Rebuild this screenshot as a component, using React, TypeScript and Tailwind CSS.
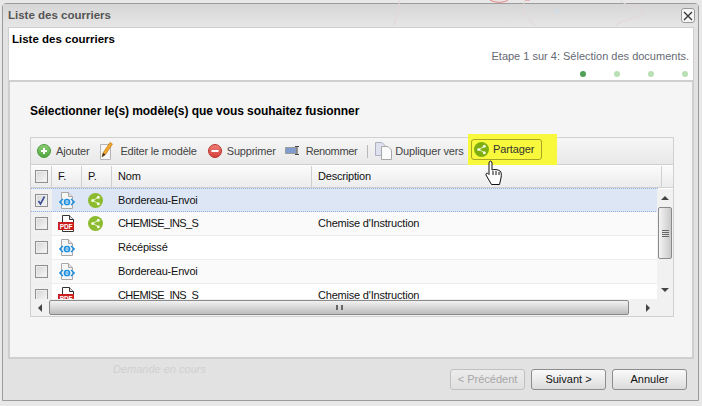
import React from "react";

const font = { fontFamily: '"Liberation Sans", Arial, sans-serif' };

const Check = ({ on }: { on?: boolean }) => (
  <span className="flex h-[13px] w-[13px] items-center justify-center border border-[#8e8f8f] bg-gradient-to-br from-[#d4d4d4] to-[#f8f8f8] shadow-[inset_0_0_0_1px_#eeeeee]">
    {on && (
      <svg width="11" height="11" viewBox="0 0 11 11">
        <path d="M2.5 6 L4.5 9 L8.5 1.5" fill="none" stroke="#3a4f96" strokeWidth="1.6" />
      </svg>
    )}
  </span>
);

const IeIcon = () => (
  <svg width="16" height="17" viewBox="0 0 16 17">
    <path d="M2.5 .5 H9.5 L13.5 4.5 V16.5 H2.5 Z" fill="#f6f6f6" stroke="#a8a8a8" />
    <path d="M9.5 .5 V4.5 H13.5" fill="#e2e2e2" stroke="#a8a8a8" />
    <path d="M4 7 L.8 10 L4 13 M12 7 L15.2 10 L12 13" fill="none" stroke="#1a8fe0" strokeWidth="1.4" />
    <circle cx="8" cy="10" r="2.6" fill="none" stroke="#1a8fe0" strokeWidth="1.5" />
    <path d="M6 10 H10" stroke="#1a8fe0" />
  </svg>
);

const PdfIcon = () => (
  <svg width="17" height="17" viewBox="0 0 17 17">
    <path d="M4.5 .5 H11.5 L15.5 4.5 V16.5 H4.5 Z" fill="#fff" stroke="#333" />
    <path d="M11.5 .5 V4.5 H15.5" fill="#ddd" stroke="#333" />
    <rect x="0" y="7" width="16" height="8" fill="#c9201f" />
    <text x="8" y="13.6" textAnchor="middle" fontSize="6.5" fontWeight="700" fill="#fff" fontFamily="Liberation Sans">PDF</text>
  </svg>
);

const ShareIcon = ({ size = 15, bg = "#8dbb2f" }: { size?: number; bg?: string }) => (
  <svg width={size} height={size} viewBox="0 0 15 15">
    <circle cx="7.5" cy="7.5" r="7.5" fill={bg} />
    <path d="M10.3 4.3 L5 7.5 L10.3 10.7" fill="none" stroke="#e6f2c8" />
    <circle cx="10.3" cy="4.3" r="1.5" fill="#f3f9e2" />
    <circle cx="4.7" cy="7.5" r="1.5" fill="#f3f9e2" />
    <circle cx="10.3" cy="10.7" r="1.5" fill="#f3f9e2" />
  </svg>
);

const RoundIcon = ({ id, top, bottom, dark, plus }: { id: string; top: string; bottom: string; dark: string; plus?: boolean }) => (
  <svg width="14" height="14" viewBox="0 0 14 14">
    <defs>
      <linearGradient id={id} x1="0" y1="0" x2="0" y2="1">
        <stop offset="0" stopColor={top} />
        <stop offset="1" stopColor={bottom} />
      </linearGradient>
    </defs>
    <circle cx="7" cy="7" r="6.5" fill={`url(#${id})`} stroke={dark} />
    <path d={plus ? "M4 7 H10 M7 4 V10" : "M3.5 7 H10.5"} stroke="#fff" strokeWidth="2" />
  </svg>
);

const EditIcon = () => (
  <svg width="16" height="20" viewBox="0 0 16 20">
    <path d="M1.5 3.5 H11.5 V18.5 H1.5 Z" fill="#f7f7f7" stroke="#b5b5b5" />
    <path d="M3 16 L4 12 L11 1.5 L13.5 3 L6.5 13.5 Z" fill="#f0a92c" stroke="#c47a16" strokeWidth=".7" />
    <path d="M3 16 L4 12 L6.5 13.5 Z" fill="#333" />
  </svg>
);

const RenameIcon = () => (
  <svg width="16" height="10" viewBox="0 0 16 10">
    <path d="M.5 1.5 H11 V7.5 H.5 Z" fill="#7f9bd0" stroke="#9a9a9a" />
    <path d="M10 .5 H14 M12 .5 V8.5 M10 8.5 H14" stroke="#444" fill="none" />
  </svg>
);

const DuplicateIcon = () => (
  <svg width="17" height="18" viewBox="0 0 17 18">
    <path d="M.5 .5 H7 L10 3.5 V13.5 H.5 Z" fill="#dfe1ef" stroke="#aeb0c4" />
    <path d="M6.5 4.5 H13 L16.5 8 V17.5 H6.5 Z" fill="#fbfbfb" stroke="#a8a8a8" />
  </svg>
);

const Tool = ({ icon, label, gap = "gap-[5px]" }: { icon: React.ReactNode; label: string; gap?: string }) => (
  <span className={`flex items-center whitespace-nowrap ${gap}`}>
    {icon}
    <span>{label}</span>
  </span>
);

const rows = [
  { icon: "ie", shared: true, nom: "Bordereau-Envoi", desc: "", selected: true },
  { icon: "pdf", shared: true, nom: "CHEMISE_INS_S", desc: "Chemise d'Instruction" },
  { icon: "ie", nom: "Récépissé", desc: "" },
  { icon: "ie", nom: "Bordereau-Envoi", desc: "" },
  { icon: "pdf", nom: "CHEMISE_INS_S", desc: "Chemise d'Instruction" },
];

const Arrow = ({ d }: { d: "up" | "down" | "left" | "right" }) => {
  const p = { up: "M0 5 L4 1 L8 5 Z", down: "M0 1 L8 1 L4 5 Z", left: "M5 0 V8 L1 4 Z", right: "M1 0 V8 L5 4 Z" }[d];
  const vertical = d === "up" || d === "down";
  return (
    <svg width={vertical ? 8 : 6} height={vertical ? 6 : 8} viewBox={vertical ? "0 0 8 6" : "0 0 6 8"}>
      <path d={p} fill="#444" />
    </svg>
  );
};

const Grid = () => (
  <div className="relative h-[180px] w-[644px] overflow-hidden border border-[#d0d0d0] bg-white text-[11px] tracking-[-0.2px] text-[#111]">
    <div className="flex h-[27px] items-center border-b border-[#d0d0d0] bg-gradient-to-b from-[#f6f6f6] to-[#e9e9e9] pl-[6px] text-[#444]">
      <Tool icon={<RoundIcon id="add" top="#8fd07a" bottom="#4fa53c" dark="#4d9a3c" plus />} label="Ajouter" />
      <span className="ml-[10px]"><Tool icon={<EditIcon />} label="Editer le modèle" /></span>
      <span className="ml-[11px]"><Tool icon={<RoundIcon id="del" top="#f0807a" bottom="#d43f38" dark="#b9352f" />} label="Supprimer" /></span>
      <span className="ml-[9px] tracking-[-0.35px]"><Tool icon={<RenameIcon />} label="Renommer" /></span>
      <span className="ml-[10px] h-[13px] w-px bg-[#b8b8b8]" />
      <span className="ml-[7px]"><Tool icon={<DuplicateIcon />} label="Dupliquer vers" gap="gap-[3px]" /></span>
    </div>
    <div className="flex h-[23px] border-b border-[#d0d0d0] bg-gradient-to-b from-[#fcfcfc] to-[#ececec] pt-px">
      <div className="flex w-[21px] items-center justify-center border-r border-[#d0d0d0]"><Check /></div>
      <div className="flex w-[30px] items-center border-r border-[#d0d0d0] pl-[6px]">F.</div>
      <div className="flex w-[30px] items-center border-r border-[#d0d0d0] pl-[6px]">P.</div>
      <div className="flex w-[200px] items-center border-r border-[#d0d0d0] pl-[6px]">Nom</div>
      <div className="flex w-[350px] items-center border-r border-[#d0d0d0] pl-[6px]">Description</div>
    </div>
    <div className="h-[112px] w-[627px] overflow-hidden">
      {rows.map((r, i) => (
        <div
          key={i}
          className={`flex h-[24px] shrink-0 border-b ${
            r.selected
              ? "border-dotted border-b-[#8fb0e0] border-t border-t-[#8fb0e0] bg-[#dde6f5]"
              : i % 2 === 1
              ? "border-[#ededed] bg-[#fafafa]"
              : "border-[#ededed] bg-white"
          }`}
        >
          <div className="flex w-[21px] items-center justify-center bg-[#f0f0f0]"><Check on={r.selected} /></div>
          <div className={`flex w-[30px] items-center ${r.icon === "ie" ? "pl-[7px]" : "pl-[6px]"}`}>{r.icon === "ie" ? <IeIcon /> : <PdfIcon />}</div>
          <div className="flex w-[30px] items-center pl-[6px]">{r.shared && <ShareIcon />}</div>
          <div className={`flex w-[200px] items-center pl-[6px] ${r.nom.startsWith("CHEMISE") ? "tracking-[-0.6px]" : ""}`}>{r.nom}</div>
          <div className="flex items-center pl-[6px]">{r.desc}</div>
        </div>
      ))}
    </div>
    {/* vertical scrollbar */}
    <div className="absolute right-0 top-[51px] flex h-[110px] w-[16px] flex-col items-center bg-[#f1f1f1]">
      <div className="flex h-[18px] items-center"><Arrow d="up" /></div>
      <div className="flex h-[52px] w-[14px] flex-col items-center justify-center gap-px rounded-[2px] border border-[#8a8a8a] bg-gradient-to-r from-[#f4f4f4] to-[#c9c9c9]">
        <span className="h-px w-[7px] bg-[#666]" />
        <span className="h-px w-[7px] bg-[#666]" />
        <span className="h-px w-[7px] bg-[#666]" />
        <span className="h-px w-[7px] bg-[#666]" />
      </div>
      <div className="mt-auto flex h-[18px] items-center"><Arrow d="down" /></div>
    </div>
    {/* horizontal scrollbar */}
    <div className="absolute bottom-0 left-0 flex h-[17px] w-[642px] items-center bg-[#f1f1f1]">
      <div className="flex h-full w-[18px] items-center justify-center"><Arrow d="left" /></div>
      <div className="flex h-[15px] w-[580px] items-center justify-center rounded-[2px] border border-[#8a8a8a] bg-gradient-to-b from-[#f2f2f2] to-[#bdbdbd]">
        <span className="h-[5px] w-[7px] border-x-2 border-[#666]" />
      </div>
      <div className="flex h-full w-[37px] items-center justify-center"><Arrow d="right" /></div>
    </div>
  </div>
);

const Btn = ({ label, disabled }: { label: string; disabled?: boolean }) => (
  <div
    className={`flex h-[21px] w-[75px] items-center justify-center rounded-[3px] border bg-gradient-to-b text-[11px] ${
      disabled
        ? "border-[#c0c0c0] from-[#ececec] to-[#e0e0e0] text-[#a6a6a6]"
        : "border-[#8d8d8d] from-[#fafafa] to-[#dcdcdc] text-[#111]"
    }`}
  >
    {label}
  </div>
);

export default function App() {
  return (
    <div className="relative h-[406px] w-[702px] overflow-hidden bg-[#e8e8e8] pl-[2px] pr-[2px] pt-[3px]" style={font}>
      <div className="flex h-[398px] w-[697px] flex-col rounded-t-[4px] border border-[#9b9b9b] bg-[#e2e2e2]">
        <div className="flex h-[23px] shrink-0 items-center justify-between bg-gradient-to-b from-[#d6d6d6] to-[#e6e6e6] pl-[5px] pr-[3px] text-[11.5px] font-bold text-[#555]">
          <span>Liste des courriers</span>
          <span className="flex h-[15px] w-[14px] items-center justify-center rounded-[3px] border border-[#9a9a9a] bg-[#f5f5f5]">
            <svg width="10" height="10" viewBox="0 0 10 10">
              <path d="M1 1 L9 9 M9 1 L1 9" stroke="#333" strokeWidth="1.3" />
            </svg>
          </span>
        </div>
        <div className="ml-[5px] mr-[4px] flex h-[53px] shrink-0 flex-col border-x border-t border-[#cfcfcf] bg-white">
          <div className="pl-[3px] pt-[3px] text-[11.5px] font-bold text-black">Liste des courriers</div>
          <div className="pr-[4px] text-right text-[11px] text-[#666a75]">Etape 1 sur 4: Sélection des documents.</div>
          <div className="mt-[6px] flex justify-end gap-[28px] pr-[5px]">
            <span className="h-[6px] w-[6px] rounded-full bg-[#4f9f55]" />
            <span className="h-[6px] w-[6px] rounded-full bg-[#b9dfb5]" />
            <span className="h-[6px] w-[6px] rounded-full bg-[#b9dfb5]" />
            <span className="h-[6px] w-[6px] rounded-full bg-[#b9dfb5]" />
          </div>
        </div>
        <div className="ml-[5px] mr-[4px] h-[279px] shrink-0 border-2 border-[#cfcfcf] bg-[#f5f5f5] pl-[20px] pt-[20px]">
          <div className="text-[12px] font-bold tracking-[-0.06px] text-black">Sélectionner le(s) modèle(s) que vous souhaitez fusionner</div>
          <div className="mt-[17px]"><Grid /></div>
        </div>
        <div className="relative flex flex-1 items-center justify-end gap-[6px] pr-[11px]">
          <span className="absolute left-[110px] top-[2px] text-[11px] italic text-[#d0d0d0]">Demande en cours</span>
          <Btn label="< Précédent" disabled />
          <Btn label="Suivant >" />
          <Btn label="Annuler" />
        </div>
      </div>
      {/* faint map showing through the title bar */}
      <svg className="absolute left-0 top-0" width="702" height="27" viewBox="0 0 702 27">
        <path d="M400 0 L394 26 M525 0 C522 8 523 12 530 20 L535 26 M620 0 C628 8 640 6 645 12 C640 18 625 18 615 26" fill="none" stroke="#e4d6d6" />
        <path d="M490 0 C495 3 504 3 508 0 M525 0 H530" fill="none" stroke="#e88080" />
        <circle cx="557" cy="11" r="2" fill="#d0dce8" />
      </svg>
      {/* highlighted button over the toolbar */}
      <div className="absolute left-[468px] top-[134px] flex h-[31px] w-[89px] items-center bg-[#f8f83c] pl-[3px]">
        <div className="flex h-[21px] w-[71px] items-center gap-[4px] rounded-[3px] border border-[#a6a622] pl-[2px] text-[11px] tracking-[-0.1px] text-[#333]">
          <ShareIcon size={15} bg="#7fae10" />
          <span>Partager</span>
        </div>
      </div>
      <svg className="absolute left-[485px] top-[160px]" width="18" height="26" viewBox="0 0 18 26">
        <path d="M4.5 1.5 C6 .5 7 1.5 7 3 V10 C9 9 13 9.5 15 11 C16.5 12 16.5 15 16 18 L14.5 24.5 H6.5 L1 15 C.5 13 2.5 12.5 4 14.5 V3 Z" fill="#fff" stroke="#111" />
        <path d="M8 11 V15 M11 11 V15 M14 12 V15" stroke="#111" />
      </svg>
    </div>
  );
}
